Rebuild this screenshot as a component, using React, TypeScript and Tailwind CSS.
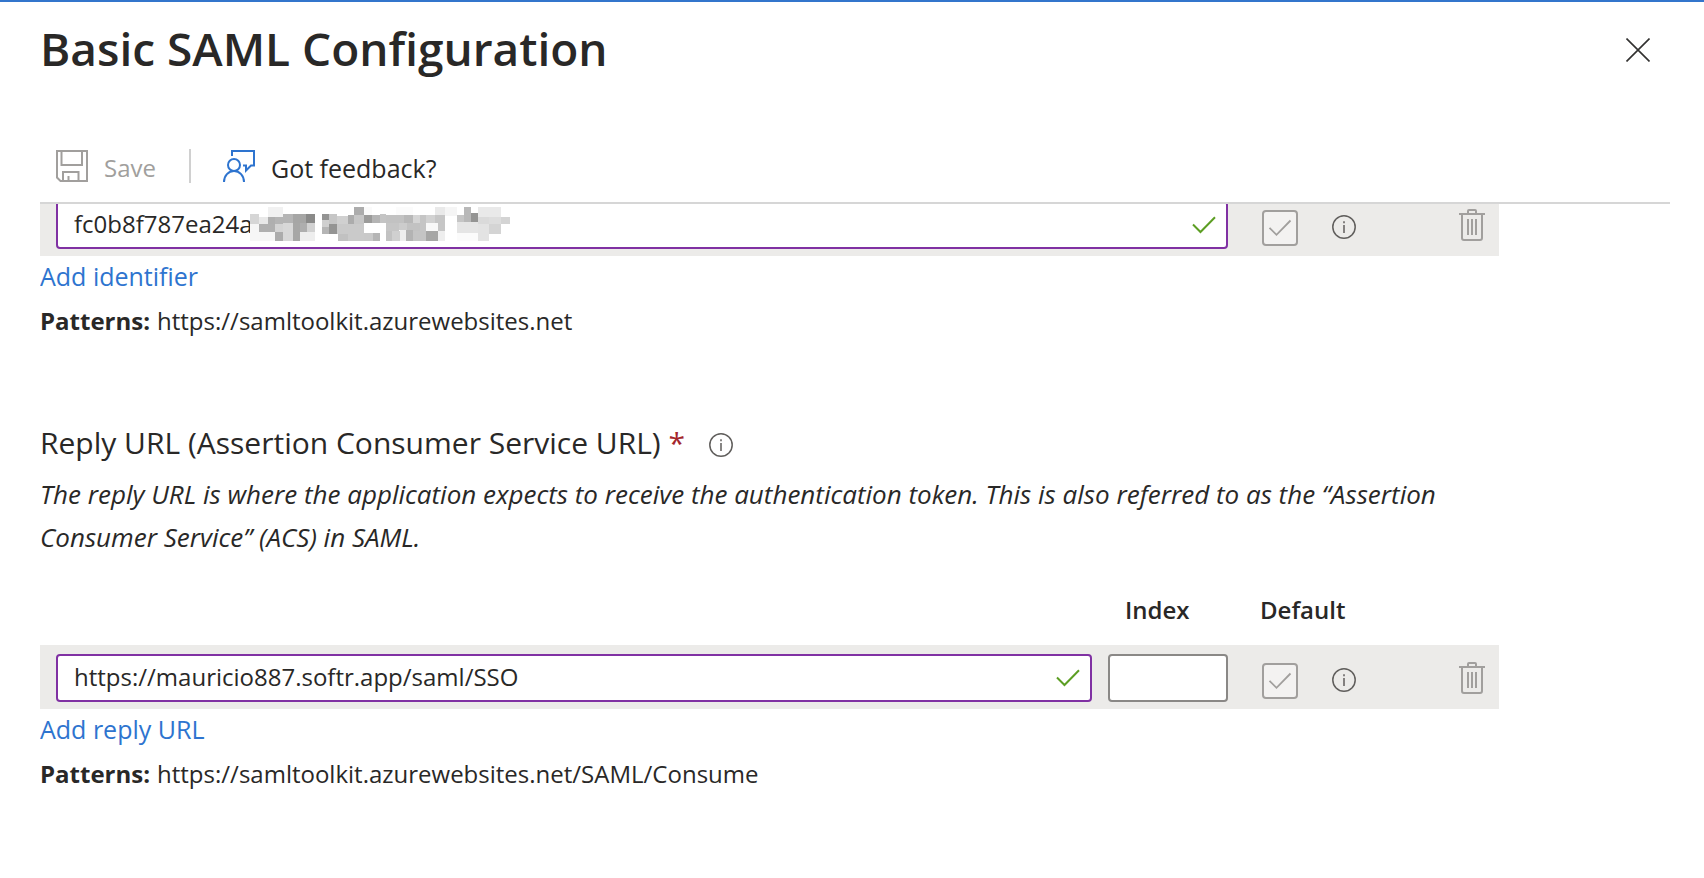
import type { ReactNode } from "react";

/* x, y, width, height, fill */
const REDACTION: [number, number, number, number, string][] = [
  [84, 36, 45, 30, "#f1f1f1"],
  [30, 57, 27, 30, "#d6d6d6"],
  [57, 66, 27, 21, "#e8e8e8"],
  [84, 66, 21, 21, "#afafaf"],
  [105, 66, 24, 21, "#b5b5b5"],
  [129, 57, 30, 27, "#b5b5b5"],
  [159, 57, 39, 27, "#a6a6a5"],
  [198, 57, 27, 27, "#8a8a89"],
  [30, 87, 27, 51, "#f6f6f6"],
  [57, 87, 48, 24, "#b0b0b0"],
  [105, 87, 24, 24, "#d4d4d4"],
  [129, 84, 30, 54, "#d8d8d8"],
  [159, 84, 21, 54, "#a7a7a6"],
  [180, 84, 21, 27, "#aeaeae"],
  [201, 84, 24, 27, "#d2d2d2"],
  [57, 111, 48, 27, "#f6f6f6"],
  [105, 111, 24, 27, "#acacac"],
  [180, 111, 45, 27, "#eeeeee"],
  [246, 57, 21, 18, "#949493"],
  [246, 75, 21, 21, "#cfcfcf"],
  [246, 96, 21, 21, "#b5b5b5"],
  [267, 57, 24, 30, "#c6c6c6"],
  [267, 87, 24, 30, "#949493"],
  [291, 63, 33, 24, "#d0d0d0"],
  [324, 60, 18, 27, "#acacac"],
  [342, 36, 30, 24, "#acacac"],
  [342, 60, 30, 27, "#c6c6c6"],
  [372, 36, 24, 24, "#fafafa"],
  [291, 87, 81, 30, "#cacaca"],
  [294, 117, 30, 21, "#c1c1c1"],
  [324, 117, 48, 21, "#cacaca"],
  [372, 114, 27, 24, "#c9c9c9"],
  [399, 114, 21, 24, "#b5b5b5"],
  [372, 60, 24, 24, "#9b9b9a"],
  [396, 60, 24, 24, "#b4b4b4"],
  [420, 57, 18, 27, "#c4c4c4"],
  [468, 36, 51, 24, "#fbfbfb"],
  [438, 60, 54, 24, "#c2c2c2"],
  [492, 60, 27, 24, "#b8b8b8"],
  [519, 60, 21, 24, "#d5d5d5"],
  [540, 60, 18, 48, "#c5c5c5"],
  [558, 60, 27, 24, "#d2d2d2"],
  [585, 60, 30, 48, "#c6c6c6"],
  [438, 84, 39, 24, "#c6c6c6"],
  [477, 84, 24, 21, "#cccccc"],
  [501, 84, 39, 24, "#c2c2c2"],
  [558, 84, 36, 24, "#f8f8f8"],
  [438, 108, 18, 30, "#c2c2c2"],
  [456, 108, 24, 30, "#d0d0d0"],
  [480, 105, 18, 33, "#eeeeee"],
  [498, 105, 21, 33, "#b3b3b3"],
  [519, 108, 39, 30, "#c4c4c4"],
  [558, 108, 36, 30, "#a6a6a5"],
  [594, 108, 21, 30, "#eeeeee"],
  [585, 36, 30, 24, "#e9e9e9"],
  [615, 36, 36, 27, "#f5f5f5"],
  [651, 60, 21, 21, "#c5c5c5"],
  [672, 36, 21, 45, "#b8b8b8"],
  [693, 54, 21, 27, "#949493"],
  [714, 36, 69, 30, "#e9e9e9"],
  [714, 66, 33, 21, "#dadada"],
  [747, 66, 36, 21, "#dddddd"],
  [783, 66, 27, 21, "#d4d4d4"],
  [651, 81, 63, 33, "#e5e5e5"],
  [714, 87, 33, 51, "#e3e3e3"],
  [747, 87, 36, 30, "#d4d4d4"],
  [651, 114, 63, 24, "#fbfbfb"],
];

function Redaction() {
  return (
    <svg
      viewBox="30 36 780 102"
      shapeRendering="crispEdges"
      aria-hidden="true"
      className="pointer-events-none absolute top-1.5 left-[194px] h-[34px] w-[260px]"
    >
      {REDACTION.map(([x, y, width, height, fill]) => (
        <rect key={`${x}-${y}`} x={x} y={y} width={width} height={height} fill={fill} />
      ))}
    </svg>
  );
}

function SaveIcon() {
  return (
    <svg viewBox="0 0 32 32" fill="none" stroke="currentColor" strokeWidth="2" className="size-8" aria-hidden="true">
      <path d="M1 1h30v30H4.500L1 27.500z" />
      <path d="M5.500 1v14h20.500V1" />
      <path d="M7 31v-9h15.500v9M12.500 26v5" />
    </svg>
  );
}

function FeedbackIcon() {
  return (
    <svg viewBox="0 0 32 32" fill="none" stroke="currentColor" strokeWidth="2" className="size-8" aria-hidden="true">
      <path d="M9 6V1h22v14.500h-3L23 20.500v-5h-3" />
      <circle cx="11" cy="15" r="6" />
      <path d="M1 32c0-6.500 4.500-11 10-11s10 4.500 10 11" />
    </svg>
  );
}

function InfoIcon() {
  return (
    <svg viewBox="0 0 24 24" fill="none" stroke="#605e5c" strokeWidth="1.5" className="size-6" aria-hidden="true">
      <circle cx="12" cy="12" r="11.200" />
      <path d="M12 6.200v2M12 10v8" />
    </svg>
  );
}

function TrashIcon() {
  return (
    <svg viewBox="0 0 26 32" fill="none" stroke="#a19f9d" strokeWidth="2" className="h-8 w-[26px]" aria-hidden="true">
      <path d="M9 5V2q0-1 1-1h6q1 0 1 1v3M0 5h26" />
      <path d="M3 5v24q0 2 2 2h16q2 0 2-2V5M9 10v16M13 10v16M17 10v16" />
    </svg>
  );
}

function ValidInput({ id, label, value, children }: { id: string; label: string; value: string; children?: ReactNode }) {
  return (
    <div className="relative min-w-0 flex-1">
      <input
        id={id}
        type="text"
        aria-label={label}
        defaultValue={value}
        className="block h-12 w-full rounded-[4px] border-2 border-[#8031a3] bg-white pr-14 pb-1 pl-4 text-[24px] text-[#292827] outline-none"
      />
      {children}
      <svg
        viewBox="0 0 24 18"
        fill="none"
        stroke="#5c9e23"
        strokeWidth="2"
        className="pointer-events-none absolute top-[15px] right-3 h-[18px] w-6"
        aria-hidden="true"
      >
        <path d="M1 8.500l7.500 7.500L23 1.200" />
      </svg>
    </div>
  );
}

function RowActions({ id, name }: { id: string; name: string }) {
  return (
    <>
      <div className="relative mt-1.5 ml-[34px]">
        <input
          id={id}
          type="checkbox"
          aria-label={`Default ${name}`}
          defaultChecked
          disabled
          className="block size-9 appearance-none rounded-[4px] border-2 border-[#a19f9d] bg-[#f3f2f1]"
        />
        <svg
          viewBox="0 0 36 36"
          fill="none"
          stroke="#a19f9d"
          strokeWidth="1.8"
          className="pointer-events-none absolute inset-0 size-9"
          aria-hidden="true"
        >
          <path d="M7.500 17.800l7 7L28.500 10.500" />
        </svg>
      </div>
      <button type="button" aria-label={`About default ${name}`} className="mt-1 ml-[34px]">
        <InfoIcon />
      </button>
      <button type="button" disabled aria-label={`Delete ${name}`} className="ml-[103px]">
        <TrashIcon />
      </button>
    </>
  );
}

const rowClass = "flex h-16 items-center bg-[#ecebe9] pt-0.5 pr-3.5 pl-4";

function FieldFooter({ action, pattern }: { action: string; pattern: string }) {
  return (
    <>
      <a href="#" className="block w-fit text-[25px] leading-10 text-[#2e74cf]">
        {action}
      </a>
      <p className="mt-[5px] flex gap-[7px] text-[24px] leading-10">
        <strong className="font-bold">Patterns:</strong>
        <span>{pattern}</span>
      </p>
    </>
  );
}

export default function App() {
  return (
    <main className="min-h-screen border-t-2 border-[#3375cc] bg-white pl-10 font-['Open_Sans','Noto_Sans',sans-serif] text-[#292827]">
      <header className="flex items-center justify-between pt-4 pr-[54px]">
        <h1 className="text-[46px] leading-[60px] font-semibold">Basic SAML Configuration</h1>
        <button type="button" aria-label="Close" className="mt-1">
          <svg viewBox="0 0 24 24" fill="none" stroke="#323130" strokeWidth="1.6" className="size-6" aria-hidden="true">
            <path d="M.5.5l23 23M23.500.5l-23 23" />
          </svg>
        </button>
      </header>

      <div className="mt-[52px] mr-[34px] flex h-[74px] items-center border-b-2 border-[#d6d6d6] pl-4">
        <button type="button" disabled className="flex items-center gap-4 text-[#a19f9d]">
          <SaveIcon />
          <span className="pt-1 text-[24px] leading-8">Save</span>
        </button>
        <div className="ml-[33px] h-[34px] w-0.5 bg-[#d0d0d0]" />
        <button type="button" className="ml-8 flex items-center gap-4">
          <span className="text-[#2e74cf]">
            <FeedbackIcon />
          </span>
          <span className="pt-1 text-[25px] leading-8">Got feedback?</span>
        </button>
      </div>

      <div className="mr-[205px] overflow-hidden">
        <section className="-mt-3">
          <div className={rowClass}>
            <ValidInput id="identifier" label="Identifier (Entity ID)" value="fc0b8f787ea24a">
              <Redaction />
            </ValidInput>
            <RowActions id="identifier-default" name="identifier" />
          </div>
          <FieldFooter action="Add identifier" pattern="https://samltoolkit.azurewebsites.net" />
        </section>

        <section className="mt-[82px]">
          <div className="flex items-center">
            <h2 className="text-[30px] leading-10">
              <label htmlFor="reply-url">Reply URL (Assertion Consumer Service URL)</label>{" "}
              <span className="text-[#a4262c]">*</span>
            </h2>
            <button type="button" aria-label="About reply URL" className="mt-1 ml-6">
              <InfoIcon />
            </button>
          </div>
          <p className="mt-2.5 text-[26px] leading-[43px] italic">
            The reply URL is where the application expects to receive the authentication token. This is also referred to
            as the “Assertion Consumer Service” (ACS) in SAML.
          </p>
          <div className="mt-[31px] mb-[15px] flex justify-end text-[24px] leading-10 font-semibold">
            <label htmlFor="reply-index" className="w-[135px]">
              Index
            </label>
            <label htmlFor="reply-default" className="w-[239px]">
              Default
            </label>
          </div>
          <div className={rowClass}>
            <ValidInput id="reply-url" label="Reply URL" value="https://mauricio887.softr.app/saml/SSO" />
            <input
              id="reply-index"
              type="text"
              className="ml-4 h-12 w-[120px] rounded-[4px] border-2 border-[#8a8886] bg-white px-4 text-[24px] outline-none"
            />
            <RowActions id="reply-default" name="reply URL" />
          </div>
          <FieldFooter action="Add reply URL" pattern="https://samltoolkit.azurewebsites.net/SAML/Consume" />
        </section>
      </div>
    </main>
  );
}
